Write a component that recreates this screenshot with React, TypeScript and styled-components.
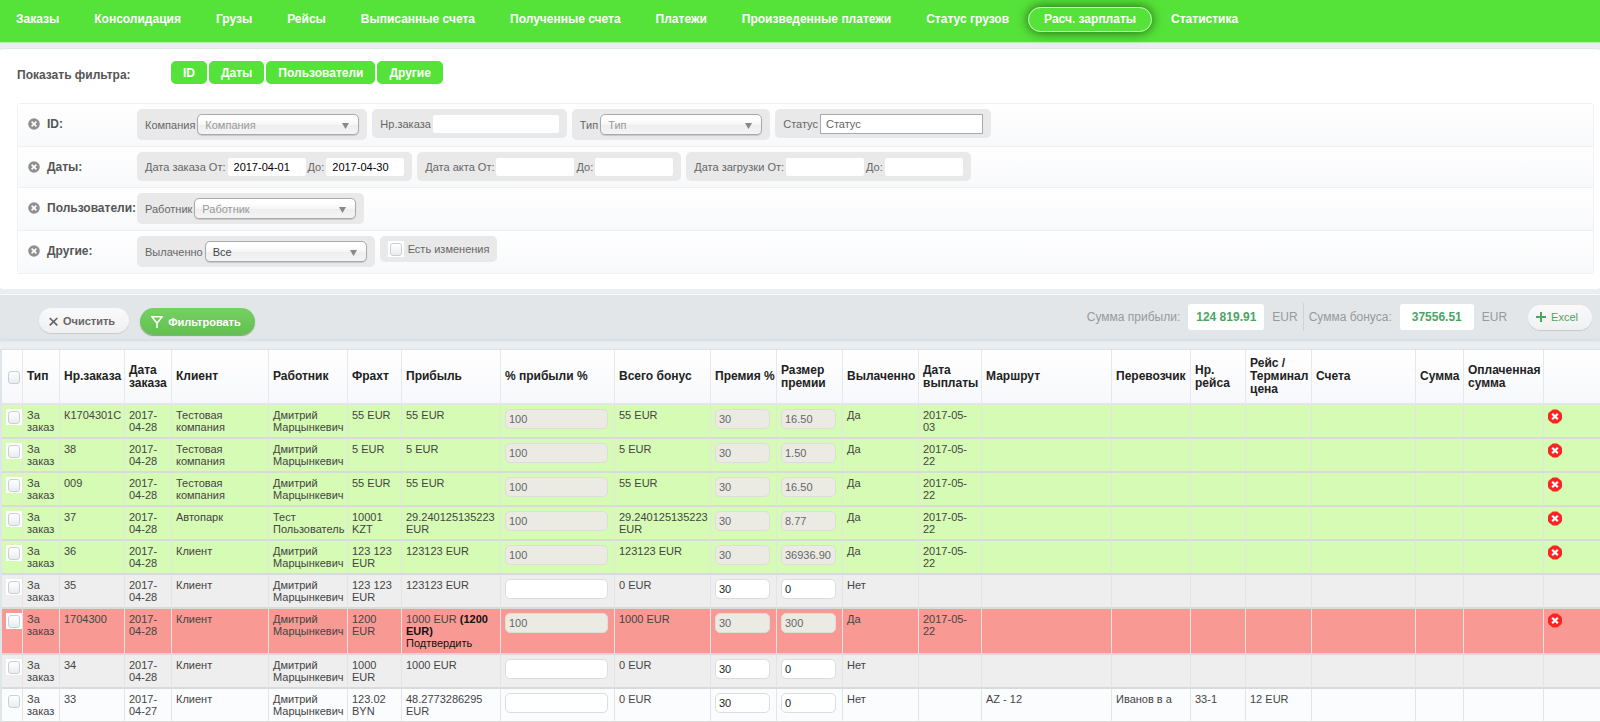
import React from 'react';
import styled, { createGlobalStyle, css } from 'styled-components';

const GlobalStyle = createGlobalStyle`
  *, *::before, *::after { box-sizing: border-box; }
  body {
    margin: 0;
    background: #e9eef2;
    color: #444;
    font-family: "Liberation Sans", Arial, sans-serif;
    font-size: 11px;
    line-height: 12px;
  }
  button, input, select { font: inherit; color: inherit; margin: 0; }
`;

const Nav = styled.nav`
  display: flex;
  align-items: flex-start;
  gap: 3px;
  height: 43px;
  padding-top: 7px;
  background: #56e339;
  border-bottom: 1px solid #b9f0b0;
`;

const NavLink = styled.a<{ $active?: boolean }>`
  padding: 0 15px;
  border: 1px solid transparent;
  border-radius: 13px;
  color: #fff;
  font-size: 12px;
  font-weight: bold;
  line-height: 23px;
  text-decoration: none;
  white-space: nowrap;
  ${p => p.$active && css`
    border-color: #c4f5ba;
    box-shadow: 0 0 12px #1d5b10;
  `}
`;

const FilterPanel = styled.section`
  margin-top: 5px;
  padding: 12px 6px 15px 17px;
  background: #fff;
  border-top: 1px solid #e0e7e9;
  border-radius: 3px;
`;

const ToggleRow = styled.div`
  display: flex;
  gap: 2px;
  margin-bottom: 13px;
`;

const ToggleTitle = styled.span`
  width: 152px;
  color: #555;
  font-size: 12px;
  font-weight: bold;
  line-height: 29px;
`;

const ToggleButton = styled.button`
  height: 23px;
  padding: 0 12px;
  border: 0;
  border-radius: 5px;
  background: #56e339;
  color: #fff;
  font-size: 12px;
  font-weight: bold;
`;

const FilterBox = styled.div`
  border: 1px solid #f0f2f3;
  border-bottom-width: 0;
  border-radius: 4px;
`;

const FilterRow = styled.div`
  display: flex;
  padding: 5px 0 6px 10px;
  border-bottom: 1px solid #eef0f1;
  background: linear-gradient(#fff, #f8f9fb);
`;

const FilterName = styled.div`
  display: flex;
  align-items: center;
  gap: 7px;
  width: 109px;
  height: 29px;
  color: #555;
  font-size: 12px;
  font-weight: bold;
  white-space: nowrap;
`;

const IconButton = styled.button`
  display: block;
  padding: 0;
  border: 0;
  background: none;
  line-height: 0;
`;

const Groups = styled.div`
  display: flex;
  align-items: flex-start;
  gap: 5px;
`;

const Group = styled.div<{ $tall?: boolean; $short?: boolean }>`
  display: flex;
  align-items: center;
  gap: ${p => (p.$short ? 4 : 2)}px;
  height: ${p => (p.$tall ? 31 : p.$short ? 26 : 29)}px;
  padding: 0 8px;
  border-radius: 5px;
  background: #e9e9e9;
  color: #666;
  white-space: nowrap;
`;

const Select = styled.select<{ $muted?: boolean }>`
  appearance: none;
  width: 162px;
  height: 21px;
  padding: 0 7px;
  border: 1px solid #aaa;
  border-radius: 5px;
  color: ${p => (p.$muted ? '#999' : '#444')};
  background:
    url("data:image/svg+xml,%3Csvg xmlns='http://www.w3.org/2000/svg' width='7' height='6'%3E%3Cpath d='M0 0h7L3.5 6z' fill='%23888'/%3E%3C/svg%3E") no-repeat right 9px top 8px,
    linear-gradient(#fff 20%, #f6f6f6 50%, #eee 52%, #f4f4f4 100%);
  box-shadow: 0 1px 1px rgba(0, 0, 0, 0.15);
`;

const TextInput = styled.input<{ $wide?: boolean }>`
  width: ${p => (p.$wide ? 126 : 78)}px;
  height: 18px;
  padding: 0 6px;
  border: 0;
  border-radius: 2px;
  background: #fff;
  color: #000;
`;

const StatusInput = styled.input`
  width: 163px;
  height: 20px;
  padding: 0 5px;
  border: 1px solid #aaa;
  background: #fff;
  &::placeholder { color: #666; opacity: 1; }
`;

const Checkbox = styled.input<{ $framed?: boolean }>`
  appearance: none;
  display: block;
  flex: none;
  width: 16px;
  height: 16px;
  padding: 2px;
  background: ${p => (p.$framed ? '#fff' : 'transparent')};
  &::before {
    content: '';
    display: block;
    width: 12px;
    height: 13px;
    border: 1px solid #c9d0d4;
    border-radius: 3px;
    background: linear-gradient(#fff, #e9edef);
  }
`;

const Toolbar = styled.section`
  display: flex;
  justify-content: space-between;
  align-items: flex-start;
  margin-top: 5px;
  height: 46px;
  padding: 8px 8px 0 39px;
  border-top: 1px solid #f8fafb;
  border-bottom: 1px solid #d9dee2;
  background: #e2e6e9;
  box-shadow: 0 1px 2px #d8dee2;
`;

const Actions = styled.div`
  display: flex;
  gap: 11px;
  padding-top: 5px;
`;

const Pill = styled.button<{ $primary?: boolean; $accent?: boolean }>`
  display: flex;
  align-items: center;
  gap: 5px;
  height: ${p => (p.$primary ? 27 : 25)}px;
  padding: 0 14px 0 ${p => (p.$primary ? 11 : 10)}px;
  border: 0;
  border-radius: 14px;
  font-size: 11px;
  font-weight: bold;
  color: #666;
  background: linear-gradient(#fafafa, #f0f0f0);
  box-shadow: 0 1px 1px rgba(0, 0, 0, 0.12);
  ${p => p.$primary && css`
    color: #fff;
    background: linear-gradient(#75d162, #62c050);
    box-shadow: 0 1px 1px rgba(0, 0, 0, 0.35);
  `}
  ${p => p.$accent && css`
    margin-left: 12px;
    padding-left: 8px;
    color: #4aa564;
    font-weight: normal;
  `}
`;

const Totals = styled.div`
  display: flex;
  align-items: center;
  gap: 9px;
  color: #999;
  font-size: 12px;
`;

const Total = styled.div<{ $divided?: boolean }>`
  display: flex;
  align-items: center;
  gap: 8px;
  height: 28px;
  ${p => p.$divided && css`
    padding-right: 5px;
    margin-right: -4px;
    border-right: 1px solid #cfd4d8;
  `}
`;

const TotalValue = styled.output`
  min-width: 74px;
  padding: 0 8px;
  border-radius: 3px;
  background: #fff;
  color: #4aa564;
  font-weight: bold;
  line-height: 26px;
  text-align: center;
`;

const TablePanel = styled.section`
  margin-top: 10px;
  padding-left: 2px;
  background: #dfe6ea;
  box-shadow: 0 -1px 1px #dce2e5;
`;

const Table = styled.table`
  width: 100%;
  table-layout: fixed;
  border-collapse: separate;
  border-spacing: 0;
`;

const HeadCell = styled.th`
  height: 55px;
  padding: 0 0 0 4px;
  border-right: 1px solid #e6e9ec;
  border-bottom: 2px solid #e3e5ea;
  background: linear-gradient(#fff, #f7f8fb);
  color: #222;
  font-size: 12px;
  line-height: 13px;
  text-align: left;
  vertical-align: middle;
  &:last-child { border-right: 0; }
`;

type Tone = 'paid' | 'alert' | 'grey' | 'plain';
const tones: Record<Tone, string> = {
  paid: '#d6fbb4',
  alert: '#f89993',
  grey: '#eee',
  plain: '#fbfcfe',
};

const BodyRow = styled.tr<{ $tone: Tone }>`
  background: ${p => tones[p.$tone]};
`;

const Cell = styled.td`
  height: 34px;
  padding: 4px;
  border-right: 1px solid #e4e4e4;
  border-bottom: 2px solid #dadada;
  vertical-align: top;
  &:last-child { border-right: 0; }
`;

const CellInput = styled.input<{ $wide?: boolean }>`
  display: block;
  width: ${p => (p.$wide ? 103 : 55)}px;
  height: 20px;
  padding: 0 3px;
  border: 1px solid #ddd;
  border-radius: 5px;
  background: #fff;
  color: #222;
  &:disabled { background: #ebebe4; color: #666; }
`;

const Strong = styled.b`
  color: #111;
`;

const Confirm = styled.a`
  color: #111;
  text-decoration: none;
`;

const CloseIcon = () => (
  <svg width="12" height="12" viewBox="0 0 11 11" aria-hidden="true">
    <circle cx="5.5" cy="5.5" r="5.3" fill="#8f8f8f" />
    <path d="M3.3 3.3l4.4 4.4M7.7 3.3L3.3 7.7" stroke="#fff" strokeWidth="1.5" />
  </svg>
);

const DeleteIcon = () => (
  <svg width="14" height="15" viewBox="0 0 14 15" aria-hidden="true">
    <path d="M4.8.5h4.4L13 3.4l1 1.9v4.4l-1 1.9-3.8 2.9H4.8L1 11.6 0 9.7V5.3l1-1.9z" fill="#fb2323" />
    <path d="M4.2 4.7l5.6 5.6M9.8 4.7l-5.6 5.6" stroke="#fff" strokeWidth="2.2" />
  </svg>
);

const ClearIcon = () => (
  <svg width="9" height="10" viewBox="0 0 9 10" aria-hidden="true">
    <path d="M.7 2l7.6 7.4M8.3 2L.7 9.4" stroke="#666" strokeWidth="1.7" />
  </svg>
);

const FunnelIcon = () => (
  <svg width="12" height="12" viewBox="0 0 12 12" aria-hidden="true">
    <path d="M.9.8h10.2L6 7.2zM6 6.5V12" fill="none" stroke="#fff" strokeWidth="1.5" />
  </svg>
);

const PlusIcon = () => (
  <svg width="10" height="10" viewBox="0 0 10 10" aria-hidden="true">
    <path d="M5 0v10M0 5h10" stroke="#4aa564" strokeWidth="2" />
  </svg>
);

const navItems = [
  'Заказы', 'Консолидация', 'Грузы', 'Рейсы', 'Выписанные счета', 'Полученные счета', 'Платежи',
  'Произведенные платежи', 'Статус грузов', 'Расч. зарплаты', 'Статистика',
];

const columns: [string, number | undefined][] = [
  ['', 21], ['Тип', 37], ['Нр.заказа', 65], ['Дата заказа', 47], ['Клиент', 97], ['Работник', 79],
  ['Фрахт', 54], ['Прибыль', 99], ['% прибыли %', 114], ['Всего бонус', 96], ['Премия %', 66],
  ['Размер премии', 66], ['Вылаченно', 76], ['Дата выплаты', 63], ['Маршрут', 130],
  ['Перевозчик', 79], ['Нр. рейса', 55], ['Рейс / Терминал цена', 66], ['Счета', 104],
  ['Сумма', 48], ['Оплаченная сумма', 80], ['', undefined],
];

interface Order {
  tone: Tone;
  id: string;
  date: string;
  client: string;
  worker: string;
  freight: string;
  profit: React.ReactNode;
  bonus: string;
  size: string;
  paidOn?: string;
  route?: string;
  carrier?: string;
  trip?: string;
  price?: string;
}

const dm = 'Дмитрий Марцынкевич';

const orders: Order[] = [
  { tone: 'paid', id: 'К1704301С', date: '2017-04-28', client: 'Тестовая компания', worker: dm, freight: '55 EUR', profit: '55 EUR', bonus: '55 EUR', size: '16.50', paidOn: '2017-05-03' },
  { tone: 'paid', id: '38', date: '2017-04-28', client: 'Тестовая компания', worker: dm, freight: '5 EUR', profit: '5 EUR', bonus: '5 EUR', size: '1.50', paidOn: '2017-05-22' },
  { tone: 'paid', id: '009', date: '2017-04-28', client: 'Тестовая компания', worker: dm, freight: '55 EUR', profit: '55 EUR', bonus: '55 EUR', size: '16.50', paidOn: '2017-05-22' },
  { tone: 'paid', id: '37', date: '2017-04-28', client: 'Автопарк', worker: 'Тест Пользователь', freight: '10001 KZT', profit: '29.240125135223 EUR', bonus: '29.240125135223 EUR', size: '8.77', paidOn: '2017-05-22' },
  { tone: 'paid', id: '36', date: '2017-04-28', client: 'Клиент', worker: dm, freight: '123 123 EUR', profit: '123123 EUR', bonus: '123123 EUR', size: '36936.90', paidOn: '2017-05-22' },
  { tone: 'grey', id: '35', date: '2017-04-28', client: 'Клиент', worker: dm, freight: '123 123 EUR', profit: '123123 EUR', bonus: '0 EUR', size: '0' },
  {
    tone: 'alert', id: '1704300', date: '2017-04-28', client: 'Клиент', worker: dm, freight: '1200 EUR',
    profit: <>1000 EUR <Strong>(1200</Strong> <Strong>EUR)</Strong><br /><Confirm href="#confirm">Подтвердить</Confirm></>,
    bonus: '1000 EUR', size: '300', paidOn: '2017-05-22',
  },
  { tone: 'grey', id: '34', date: '2017-04-28', client: 'Клиент', worker: dm, freight: '1000 EUR', profit: '1000 EUR', bonus: '0 EUR', size: '0' },
  { tone: 'plain', id: '33', date: '2017-04-27', client: 'Клиент', worker: dm, freight: '123.02 BYN', profit: '48.2773286295 EUR', bonus: '0 EUR', size: '0', route: 'AZ - 12', carrier: 'Иванов в а', trip: '33-1', price: '12 EUR' },
];

const FilterLine = ({ name, children }: { name: string; children: React.ReactNode }) => (
  <FilterRow>
    <FilterName>
      <IconButton type="button" aria-label={`Скрыть ${name}`}><CloseIcon /></IconButton>
      {name}:
    </FilterName>
    <Groups>{children}</Groups>
  </FilterRow>
);

const SelectGroup = ({ id, label, value }: { id: string; label: string; value?: string }) => (
  <Group $tall>
    <label htmlFor={id}>{label}</label>
    <Select id={id} $muted={!value}><option>{value ?? label}</option></Select>
  </Group>
);

const DateGroup = ({ id, label, from, to }: { id: string; label: string; from?: string; to?: string }) => (
  <Group>
    <label htmlFor={`${id}-from`}>{label} От:</label>
    <TextInput id={`${id}-from`} defaultValue={from} />
    <label htmlFor={`${id}-to`}>До:</label>
    <TextInput id={`${id}-to`} defaultValue={to} />
  </Group>
);

const OrderRow = ({ order }: { order: Order }) => {
  const paid = Boolean(order.paidOn);
  return (
    <BodyRow $tone={order.tone}>
      <Cell><Checkbox type="checkbox" $framed aria-label={`Выбрать ${order.id}`} /></Cell>
      <Cell>За заказ</Cell>
      <Cell>{order.id}</Cell>
      <Cell>{order.date}</Cell>
      <Cell>{order.client}</Cell>
      <Cell>{order.worker}</Cell>
      <Cell>{order.freight}</Cell>
      <Cell>{order.profit}</Cell>
      <Cell><CellInput $wide disabled={paid} defaultValue={paid ? '100' : ''} aria-label="% прибыли" /></Cell>
      <Cell>{order.bonus}</Cell>
      <Cell><CellInput disabled={paid} defaultValue="30" aria-label="Премия %" /></Cell>
      <Cell><CellInput disabled={paid} defaultValue={order.size} aria-label="Размер премии" /></Cell>
      <Cell>{paid ? 'Да' : 'Нет'}</Cell>
      <Cell>{order.paidOn}</Cell>
      <Cell>{order.route}</Cell>
      <Cell>{order.carrier}</Cell>
      <Cell>{order.trip}</Cell>
      <Cell>{order.price}</Cell>
      <Cell />
      <Cell />
      <Cell />
      <Cell>{paid && <IconButton type="button" aria-label="Удалить"><DeleteIcon /></IconButton>}</Cell>
    </BodyRow>
  );
};

export default function App() {
  return (
    <>
      <GlobalStyle />
      <Nav>
        {navItems.map(item => (
          <NavLink key={item} href="#" $active={item === 'Расч. зарплаты'}>{item}</NavLink>
        ))}
      </Nav>
      <FilterPanel>
        <ToggleRow>
          <ToggleTitle>Показать фильтра:</ToggleTitle>
          {['ID', 'Даты', 'Пользователи', 'Другие'].map(t => <ToggleButton key={t} type="button">{t}</ToggleButton>)}
        </ToggleRow>
        <FilterBox>
          <FilterLine name="ID">
            <SelectGroup id="company" label="Компания" />
            <Group>
              <label htmlFor="order">Нр.заказа</label>
              <TextInput id="order" $wide />
            </Group>
            <SelectGroup id="type" label="Тип" />
            <Group>
              <label htmlFor="status">Статус</label>
              <StatusInput id="status" placeholder="Статус" />
            </Group>
          </FilterLine>
          <FilterLine name="Даты">
            <DateGroup id="ordered" label="Дата заказа" from="2017-04-01" to="2017-04-30" />
            <DateGroup id="act" label="Дата акта" />
            <DateGroup id="loading" label="Дата загрузки" />
          </FilterLine>
          <FilterLine name="Пользователи">
            <SelectGroup id="worker" label="Работник" />
          </FilterLine>
          <FilterLine name="Другие">
            <SelectGroup id="paid" label="Вылаченно" value="Все" />
            <Group $short>
              <Checkbox id="changed" type="checkbox" $framed />
              <label htmlFor="changed">Есть изменения</label>
            </Group>
          </FilterLine>
        </FilterBox>
      </FilterPanel>
      <Toolbar>
        <Actions>
          <Pill type="button"><ClearIcon />Очистить</Pill>
          <Pill type="button" $primary><FunnelIcon />Фильтровать</Pill>
        </Actions>
        <Totals>
          <Total $divided>Сумма прибыли: <TotalValue>124 819.91</TotalValue> EUR</Total>
          <Total>Сумма бонуса: <TotalValue>37556.51</TotalValue> EUR</Total>
          <Pill type="button" $accent><PlusIcon />Excel</Pill>
        </Totals>
      </Toolbar>
      <TablePanel>
        <Table>
          <colgroup>
            {columns.map(([, width], i) => <col key={i} width={width} />)}
          </colgroup>
          <thead>
            <tr>
              {columns.map(([title], i) => (
                <HeadCell key={i}>
                  {i === 0 ? <Checkbox type="checkbox" aria-label="Выбрать все" /> : title}
                </HeadCell>
              ))}
            </tr>
          </thead>
          <tbody>
            {orders.map(order => <OrderRow key={order.id} order={order} />)}
          </tbody>
        </Table>
      </TablePanel>
    </>
  );
}
